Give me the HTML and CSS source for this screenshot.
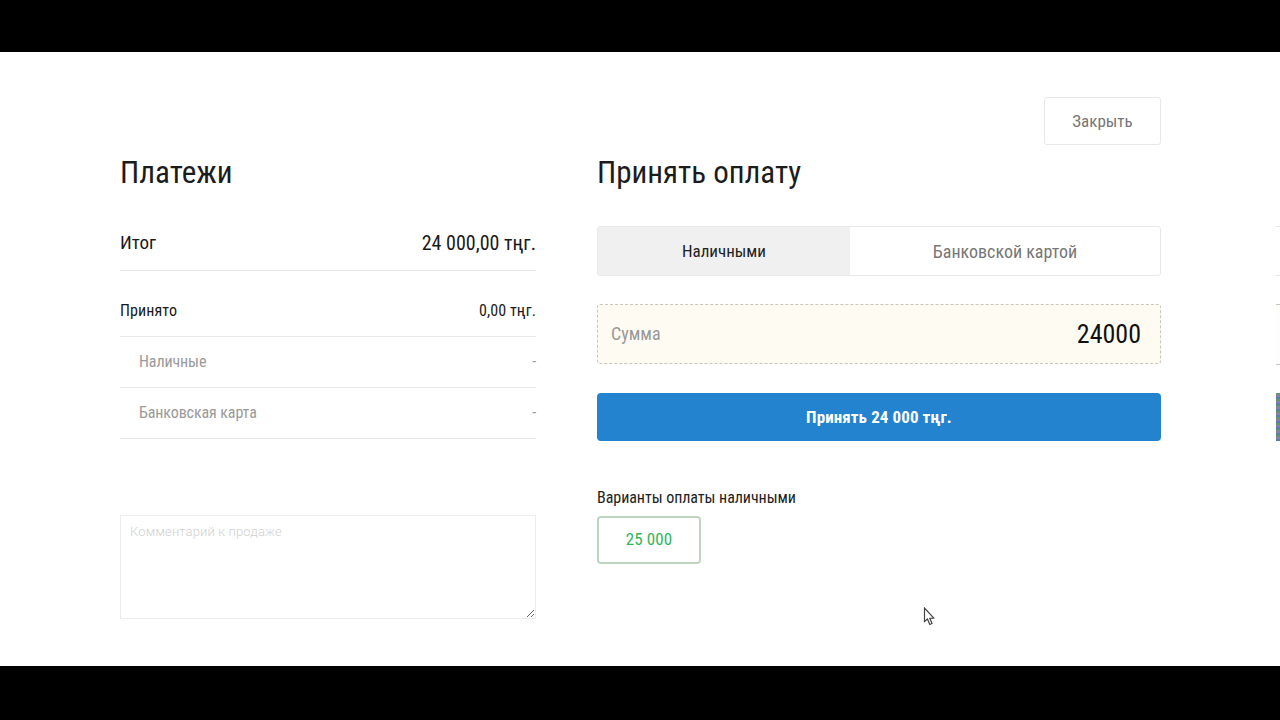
FILE: index.html
```html
<!DOCTYPE html>
<html lang="ru">

<head>
    <meta charset="UTF-8" />
    <title>Принять оплату</title>
    <link rel="stylesheet" href="styles.css">
</head>

<body>
    <div class="app">
        <div class="bar"></div>
        <div class="main">
            <div class="payments">
                <h2 class="title">Платежи</h2>
                <div class="row row-total"><span>Итог</span><span class="total-value">24 000,00 тңг.</span></div>
                <div class="row row-accepted"><span>Принято</span><span>0,00 тңг.</span></div>
                <div class="row row-sub"><span>Наличные</span><span>-</span></div>
                <div class="row row-sub"><span>Банковская карта</span><span>-</span></div>
                <textarea class="comment" placeholder="Комментарий к продаже"></textarea>
            </div>
            <div class="accept">
                <div class="close-line"><button class="close">Закрыть</button></div>
                <h2 class="title">Принять оплату</h2>
                <div class="tabs">
                    <div class="tab tab-active">Наличными</div>
                    <div class="tab tab-card">Банковской картой</div>
                </div>
                <div class="amount"><span class="amount-label">Сумма</span><span class="amount-value">24000</span></div>
                <button class="submit">Принять 24 000 тңг.</button>
                <div class="variants-label">Варианты оплаты наличными</div>
                <button class="variant">25 000</button>
            </div>
            <div class="peek">
                <div class="peek-tabs"></div>
                <div class="peek-amount"></div>
                <div class="peek-submit"></div>
            </div>
            <svg class="cursor" width="12" height="19" viewBox="0 0 12 19">
                <path d="M1.5 1 V14.5 L4.5 12 L6.8 17.5 L9 16.5 L6.8 11.3 L10.8 11 Z" fill="#fff" stroke="#444" stroke-width="1.2" />
            </svg>
        </div>
        <div class="bar bar-bottom"></div>
    </div>
</body>

</html>
```

FILE: styles.css
```css
* {
    margin: 0;
    padding: 0;
    box-sizing: border-box;
}

body {
    background: #000;
    font-family: "Roboto", sans-serif;
    font-stretch: 75%;
    overflow: hidden;
}

button,
textarea {
    font-family: inherit;
    font-stretch: inherit;
}

.app {
    display: flex;
    flex-direction: column;
    height: 720px;
}

.bar {
    height: 52px;
    background: #000;
}

.bar-bottom {
    height: 54px;
}

.main {
    position: relative;
    height: 614px;
    background: #fff;
    display: grid;
    grid-template-columns: 416px 564px 1fr;
    column-gap: 61px;
    padding-left: 120px;
}

.title {
    font-size: 31px;
    font-weight: 400;
    line-height: 40px;
    color: #1c1c1c;
}

.payments {
    padding-top: 101px;
    display: flex;
    flex-direction: column;
}

.row {
    display: flex;
    justify-content: space-between;
    align-items: center;
}

.row-total {
    margin-top: 30px;
    height: 48px;
    padding-bottom: 8px;
    font-size: 19px;
    color: #1a1a1a;
    border-bottom: 1px solid #e8e8e8;
}

.total-value {
    font-size: 20px;
}

.row-accepted {
    margin-top: 15px;
    height: 51px;
    padding-bottom: 2px;
    font-size: 16px;
    letter-spacing: 0.1px;
    color: #1a1a1a;
    border-bottom: 1px solid #e8e8e8;
}

.row-sub {
    height: 51px;
    padding-bottom: 1px;
    font-size: 16px;
    letter-spacing: -0.1px;
    color: #9a9a9a;
    padding-left: 19px;
    border-bottom: 1px solid #e8e8e8;
}

.comment {
    margin-top: 76px;
    height: 104px;
    padding: 8px 9px;
    font-stretch: 100%;
    font-size: 13px;
    font-weight: 300;
    letter-spacing: 0.15px;
    border: 1px solid #ececec;
    outline: none;
}

.comment::placeholder {
    color: #d0d0d0;
}

.accept {
    padding-top: 45px;
    display: flex;
    flex-direction: column;
}

.close-line {
    display: flex;
    justify-content: flex-end;
    height: 56px;
}

.close {
    width: 117px;
    height: 48px;
    background: #fff;
    border: 1px solid #e8e8e8;
    border-radius: 3px;
    font-size: 17px;
    color: #777;
}

.accept .title {
    margin-bottom: 33px;
}

.tabs {
    display: flex;
    height: 50px;
    border: 1px solid #e8e8e8;
    border-radius: 3px;
}

.tab {
    display: flex;
    align-items: center;
    justify-content: center;
}

.tab-active {
    width: 252px;
    background: #f0f0f0;
    font-size: 17px;
    color: #222;
}

.tab-card {
    flex: 1;
    font-size: 18px;
    color: #777;
}

.amount {
    margin-top: 28px;
    height: 60px;
    padding: 0 19px 0 13px;
    display: flex;
    justify-content: space-between;
    align-items: center;
    background: #fefbf2;
    border: 1px dashed #c9c6ba;
    border-radius: 3px;
}

.amount-label {
    margin-bottom: 2px;
    font-size: 18px;
    color: #999;
}

.amount-value {
    font-size: 26px;
    color: #111;
}

.submit {
    margin-top: 29px;
    height: 48px;
    background: #2383cf;
    border: none;
    border-radius: 4px;
    color: #fff;
    font-size: 17px;
    font-weight: 700;
    letter-spacing: 0.1px;
}

.variants-label {
    margin-top: 46px;
    height: 29px;
    font-size: 16px;
    line-height: 21px;
    letter-spacing: -0.05px;
    color: #222;
}

.variant {
    width: 104px;
    height: 48px;
    padding-bottom: 2px;
    background: #fff;
    border: 2px solid #bcd6c2;
    border-radius: 4px;
    color: #2fb457;
    font-size: 17px;
    letter-spacing: 0.1px;
}

.peek {
    justify-self: end;
    width: 4px;
    padding-top: 174px;
}

.peek-tabs {
    height: 50px;
    border-top: 1px solid #e8e8e8;
    border-bottom: 1px solid #e8e8e8;
}

.peek-amount {
    margin-top: 28px;
    height: 61px;
    background: #fdfdfb;
    border-top: 1px dashed #c9c6ba;
    border-bottom: 1px dashed #c9c6ba;
}

.peek-submit {
    margin-top: 28px;
    height: 48px;
    background: repeating-linear-gradient(#6b8f71 0 2px, #8a7fa8 2px 4px, #5a7fa8 4px 6px);
}

.cursor {
    position: absolute;
    left: 923px;
    top: 555px;
}
```
